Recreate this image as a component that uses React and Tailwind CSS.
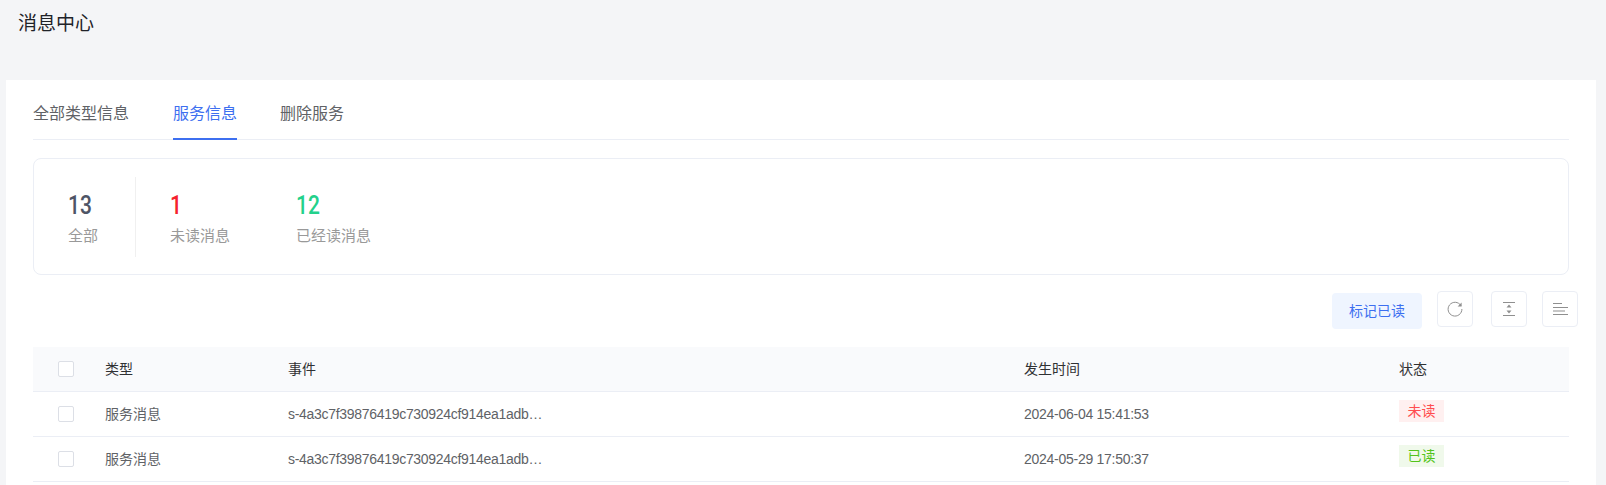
const font = { fontFamily: '"Liberation Sans", "Noto Sans CJK SC", sans-serif' };
const num = { fontFamily: "Roboto, sans-serif" };

function Check() {
  return <span className="block w-4 h-4 rounded-[2px] border border-[#dcdfe6] bg-white" />;
}

function Row({ type, time, status, read }) {
  return (
    <div className="flex items-center h-[45px] border-b border-[#ebeef5] text-[14px] text-[#606266]">
      <div className="w-[72px] pl-[25px] shrink-0"><Check /></div>
      <div className="w-[183px] shrink-0">{type}</div>
      <div className="w-[736px] shrink-0 truncate pr-[476px] tracking-[-0.3px]">s-4a3c7f39876419c730924cf914ea1adb3f2c91</div>
      <div className="w-[375px] shrink-0 tracking-[-0.27px]">{time}</div>
      <div className="pb-[6px]">
        <span className={`flex items-center justify-center w-[45px] h-[22px] text-[14px] ${read ? "bg-[#f0f9eb] text-[#52c41a]" : "bg-[#fff0f0] text-[#ff4d4f]"}`}>{status}</span>
      </div>
    </div>
  );
}

function IconBtn({ children, className }) {
  return (
    <button className={`flex items-center justify-center w-9 h-9 rounded-[4px] border border-[#ebeef5] bg-white ${className}`}>
      {children}
    </button>
  );
}

function Stat({ value, label, color, className }) {
  return (
    <div className={`flex flex-col h-[80px] pl-[34px] ${className}`}>
      <div className={`text-[25px] leading-[28px] mt-[15px] font-medium origin-left scale-x-[0.84] ${color}`} style={num}>{value}</div>
      <div className="text-[15px] leading-[22px] mt-[5px] text-[#999] whitespace-nowrap">{label}</div>
    </div>
  );
}

export default function App() {
  return (
    <div className="w-[1606px] h-[485px] overflow-hidden bg-[#f4f5f7]" style={font}>
      <div className="h-20 pl-[18px] pt-[10px] text-[19px] leading-[27px] text-[#1f2329]">消息中心</div>
      <div className="ml-1.5 w-[1590px] h-[405px] bg-white pl-[27px] pr-[27px]">
        <div className="flex h-[60px] border-b border-[#ebeef5] text-[16px] text-[#606266]">
          <div className="pt-[22px] mr-[44px]">全部类型信息</div>
          <div className="pt-[22px] mr-[43px] h-[60px] text-[#3d6ff0] border-b-2 border-[#3d6ff0]">服务信息</div>
          <div className="pt-[22px]">删除服务</div>
        </div>
        <div className="mt-[18px] h-[117px] rounded-lg border border-[#ebeef5] flex items-center">
          <Stat value="13" label="全部" color="text-[#4e5566]" className="w-[102px] border-r border-[#f0f0f0]" />
          <Stat value="1" label="未读消息" color="text-[#f5222d]" className="w-[126px]" />
          <Stat value="12" label="已经读消息" color="text-[#23d18b]" />
        </div>
        <div className="h-[36px] mt-[16px]">
          <div className="flex items-start w-[1546px]">
            <button className="ml-[1299px] mt-[2px] w-[90px] h-9 rounded-[4px] bg-[#eff5ff] text-[#3d6ff0] text-[14px]">标记已读</button>
            <IconBtn className="ml-[15px]">
              <svg width="16" height="16" viewBox="0 0 16 16" fill="none" stroke="#8f8f8f" strokeWidth="1">
                <path d="M13.9 4.6A6.9 6.9 0 1 0 14.9 8" />
                <path d="M14.6 1.4v4h-4z" fill="#8f8f8f" stroke="none" />
              </svg>
            </IconBtn>
            <IconBtn className="ml-[18px]">
              <svg width="14" height="16" viewBox="0 0 14 16" fill="none">
                <path d="M1 1.5h12M1 14.5h12" stroke="#8f8f8f" />
                <path d="M7 3.5l2.5 3h-5zM7 12.5l2.5-3h-5z" fill="#8f8f8f" />
              </svg>
            </IconBtn>
            <IconBtn className="ml-[15px]">
              <svg width="16" height="14" viewBox="0 0 16 14" fill="none" stroke="#8f8f8f">
                <path d="M1 1.5h9M1 5.5h15M1 9h12M1 12.5h15" />
              </svg>
            </IconBtn>
          </div>
        </div>
        <div className="mt-[20px] text-[14px]">
          <div className="flex items-center h-[45px] bg-[#f9fafc] border-b border-[#ebeef5] text-[#303133]">
            <div className="w-[72px] pl-[25px] shrink-0"><Check /></div>
            <div className="w-[183px] shrink-0">类型</div>
            <div className="w-[736px] shrink-0">事件</div>
            <div className="w-[375px] shrink-0">发生时间</div>
            <div>状态</div>
          </div>
          <Row type="服务消息" time="2024-06-04 15:41:53" status="未读" />
          <Row type="服务消息" time="2024-05-29 17:50:37" status="已读" read />
        </div>
      </div>
    </div>
  );
}
